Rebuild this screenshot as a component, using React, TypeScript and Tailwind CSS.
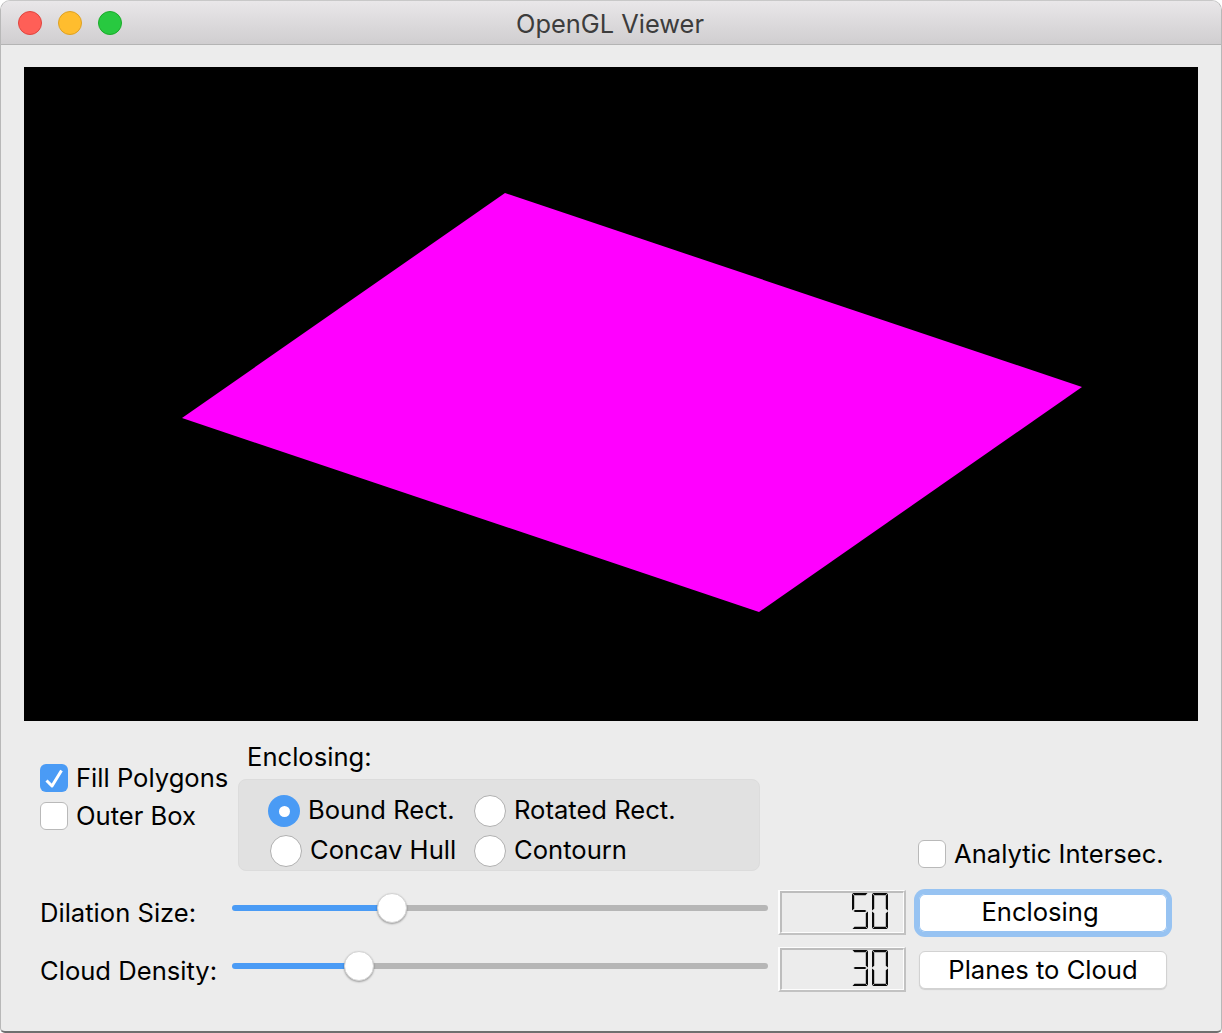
const font = "font-['Inter','Liberation_Sans',sans-serif]";

function Checkbox({ checked }: { checked?: boolean }) {
  return checked ? (
    <span className="flex h-[28px] w-[28px] shrink-0 items-center justify-center rounded-[6px] bg-[#4a9bf5]">
      <svg width="28" height="28" viewBox="0 0 28 28" fill="none">
        <path d="M6.5 16.5 L12 22 L21.5 6.5" stroke="white" strokeWidth="3" strokeLinejoin="round" />
      </svg>
    </span>
  ) : (
    <span className="h-[28px] w-[28px] shrink-0 rounded-[6px] border border-[#b9b9b9] bg-white" />
  );
}

function Radio({ checked }: { checked?: boolean }) {
  return checked ? (
    <span className="flex h-[32px] w-[32px] shrink-0 items-center justify-center rounded-full bg-[#4a9bf5]">
      <span className="h-[11px] w-[11px] rounded-full bg-white" />
    </span>
  ) : (
    <span className="h-[32px] w-[32px] shrink-0 rounded-full border border-[#b0b0b0] bg-white" />
  );
}

function RadioItem({ label, checked, className }: { label: string; checked?: boolean; className: string }) {
  return (
    <div className={`flex h-[40px] items-center ${className}`}>
      <Radio checked={checked} />
      <span className="ml-[8px] whitespace-nowrap pb-[2px]">{label}</span>
    </div>
  );
}

const SEG: Record<string, string> = {
  top: "0.5,0 15.5,0 13.5,2.2 2.5,2.2",
  bottom: "2.5,33.8 13.5,33.8 15.5,36 0.5,36",
  mid: "1.5,18 3,16.9 13,16.9 14.5,18 13,19.1 3,19.1",
  ul: "0,0.5 2.2,2.8 2.2,15.8 0,17.5",
  ur: "16,0.5 13.8,2.8 13.8,15.8 16,17.5",
  ll: "0,18.5 2.2,20.2 2.2,33.2 0,35.5",
  lr: "16,18.5 13.8,20.2 13.8,33.2 16,35.5",
};

const DIGITS: Record<string, string[]> = {
  "5": ["top", "ul", "mid", "lr", "bottom"],
  "0": ["top", "ul", "ur", "ll", "lr", "bottom"],
  "3": ["top", "ur", "mid", "lr", "bottom"],
};

function Lcd({ value }: { value: string }) {
  return (
    <div className="h-[45px] w-[128px] shrink-0 border-t border-r-2 border-b-2 border-l-2 border-t-[#fdfdfd] border-r-[#c2c2c2] border-b-[#c2c2c2] border-l-[#fdfdfd]">
      <div className="flex h-full justify-end border-t-2 border-r border-b border-l-2 border-t-[#bdbdbd] border-r-[#fdfdfd] border-b-[#fdfdfd] border-l-[#bdbdbd] pr-[15px]">
        <div className="relative flex h-[36px] w-[36px] gap-[4px]">
          <span className="absolute inset-0 text-[32px] leading-[36px] text-transparent">{value}</span>
          {value.split("").map((d, i) => (
            <svg key={i} width="16" height="36" viewBox="0 0 16 36" fill="#0a0a0a">
              {DIGITS[d].map((s) => (
                <polygon key={s} points={SEG[s]} />
              ))}
            </svg>
          ))}
        </div>
      </div>
    </div>
  );
}

function SliderTrack({ pos, className }: { pos: number; className: string }) {
  return (
    <div className={`flex h-[30px] w-[536px] items-center ${className}`}>
      <div className="h-[6px] rounded-l-full bg-[#4a9bf5]" style={{ width: pos }} />
      <div className="z-10 -mx-[15px] h-[30px] w-[30px] shrink-0 rounded-full border border-[#d4d4d4] bg-white shadow-[0_1px_2px_rgba(0,0,0,0.35)]" />
      <div className="h-[6px] flex-1 rounded-r-full bg-[#b6b6b6]" />
    </div>
  );
}

function Row({ label, labelClass, sliderClass, pos, value, focused, button }: { label: string; labelClass: string; sliderClass: string; pos: number; value: string; focused?: boolean; button: string }) {
  return (
    <div className="flex h-[45px] items-center">
      <span className={`w-[192px] whitespace-nowrap ${labelClass}`}>{label}</span>
      <SliderTrack pos={pos} className={sliderClass} />
      <div className="ml-[10px]">
        <Lcd value={value} />
      </div>
      <button
        className={`ml-[13px] h-[38px] w-[248px] rounded-[6px] bg-white ${
          focused
            ? "pr-[6px] pb-[2px] shadow-[inset_0_0_0_1px_#97c3f2,0_0_0_5px_#97c3f2]"
            : "border border-[#d2d2d2] shadow-[0_1px_1px_rgba(0,0,0,0.12)]"
        }`}
      >
        {button}
      </button>
    </div>
  );
}

export default function App() {
  return (
    <div className={`${font} flex h-[1033px] w-[1222px] flex-col overflow-hidden rounded-t-[10px] rounded-b-[5px] border-x border-t border-b-2 border-t-[#c8c8c8] border-x-[#b8b8b8] border-b-[#6f6f6f] bg-[#ececec] text-[25.6px] leading-none text-black antialiased`}>
      <header className="relative flex h-[44px] shrink-0 items-center justify-center border-b border-[#b4b4b4] bg-gradient-to-b from-[#e9e7e9] to-[#d0ced0]">
        <div className="absolute left-[17px] top-[10px] flex gap-[16px]">
          <span className="h-[24px] w-[24px] rounded-full border border-[#e0443e] bg-[#ff5f57]" />
          <span className="h-[24px] w-[24px] rounded-full border border-[#dea123] bg-[#ffbd2e]" />
          <span className="h-[24px] w-[24px] rounded-full border border-[#1aab29] bg-[#28c940]" />
        </div>
        <span className="pt-[3px] pr-[2px] text-[25.4px] text-[#3c3c3c]">OpenGL Viewer</span>
      </header>

      <main className="flex flex-1 flex-col px-[23px] pt-[22px]">
        <div className="h-[654px] w-[1174px] bg-black">
          <svg width="1174" height="654" viewBox="0 0 1174 654">
            <polygon points="481,126 1058,320 735,545 158,351" fill="#ff00ff" />
          </svg>
        </div>

        <section className="flex h-[169px] pl-[16px]">
          <div className="flex w-[198px] flex-col gap-[10px] pt-[43px]">
            <div className="flex items-center gap-[8px]">
              <Checkbox checked />
              <span className="whitespace-nowrap">Fill Polygons</span>
            </div>
            <div className="flex items-center gap-[8px]">
              <Checkbox />
              <span className="whitespace-nowrap">Outer Box</span>
            </div>
          </div>
          <div className="flex w-[522px] flex-col">
            <div className="h-[58px] pl-[9px] pt-[23px]">Enclosing:</div>
            <div className="h-[92px] rounded-[8px] border border-[#dcdcdc] bg-[#e1e1e1] pl-[29px] pt-[11px]">
              <div className="flex">
                <RadioItem label="Bound Rect." checked className="w-[206px]" />
                <RadioItem label="Rotated Rect." className="" />
              </div>
              <div className="flex">
                <RadioItem label="Concav Hull" className="ml-[2px] w-[204px]" />
                <RadioItem label="Contourn" className="" />
              </div>
            </div>
          </div>
          <div className="ml-[158px] flex items-center gap-[8px] self-start pt-[119px]">
            <Checkbox />
            <span className="whitespace-nowrap">Analytic Intersec.</span>
          </div>
        </section>

        <div className="flex flex-col gap-[12px] pl-[16px]">
          <Row label="Dilation Size:" labelClass="" sliderClass="-mt-[9px]" pos={160} value="50" focused button="Enclosing" />
          <Row label="Cloud Density:" labelClass="pt-[2px]" sliderClass="-mt-[7px]" pos={127} value="30" button="Planes to Cloud" />
        </div>
      </main>
    </div>
  );
}
